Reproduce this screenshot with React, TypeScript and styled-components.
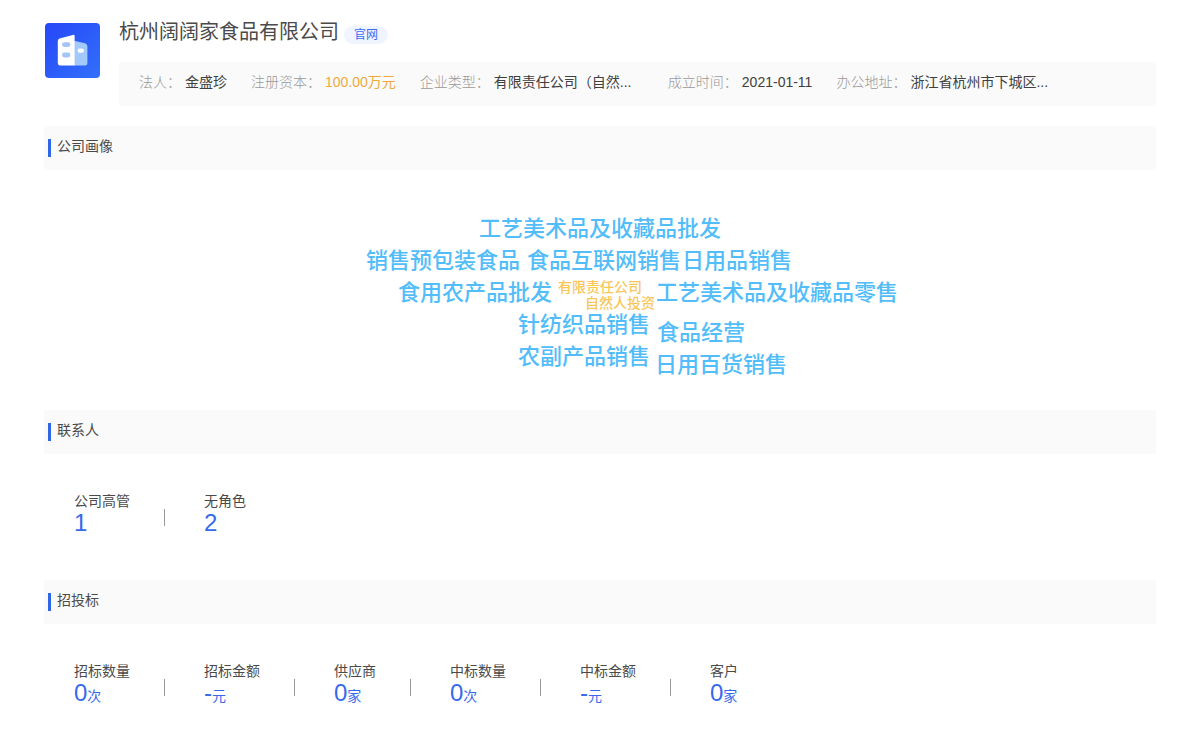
import React from "react";
import styled, { createGlobalStyle } from "styled-components";

const GlobalStyle = createGlobalStyle`
  * { box-sizing: border-box; }
  body {
    margin: 0;
    background: #fff;
    color: #4a4a4a;
    font-family: "Liberation Sans", "Noto Sans CJK SC", sans-serif;
    font-size: 14px;
    line-height: 20px;
  }
`;

const Page = styled.main`
  padding: 18px 44px 32px;
`;

const Header = styled.header`
  display: flex;
  gap: 19px;
  margin-bottom: 20px;
`;

const Logo = styled.svg`
  flex: none;
  width: 56px;
  height: 56px;
  margin-top: 4px;
`;

const HeaderBody = styled.div`
  flex: 1;
  min-width: 0;
`;

const TitleRow = styled.div`
  display: flex;
  align-items: center;
  gap: 5px;
  height: 28px;
  margin-bottom: 16px;
`;

const CompanyName = styled.h1`
  margin: 0;
  font-size: 20px;
  font-weight: 400;
  line-height: 28px;
  color: #4a4a4a;
`;

const SiteLink = styled.a`
  margin-top: 6px;
  padding: 0 10px;
  border-radius: 9px;
  background: #eff4fe;
  color: #3a6cf0;
  font-size: 12px;
  line-height: 18px;
  text-decoration: none;
`;

const Facts = styled.dl`
  display: flex;
  flex-wrap: wrap;
  column-gap: 24px;
  margin: 0;
  padding: 10px 20px 14px;
  background: #fafafa;
`;

const Fact = styled.div`
  display: flex;
  gap: 4px;
`;

const FactLabel = styled.dt`
  color: #999;
  font-weight: 300;
`;

const FactValue = styled.dd<{ $highlight?: boolean; $wide?: boolean }>`
  margin: 0;
  min-width: ${(p) => (p.$wide ? "150px" : "0")};
  color: ${(p) => (p.$highlight ? "#f0a93a" : "#404040")};
  white-space: nowrap;
`;

const SectionHeading = styled.h2`
  display: flex;
  align-items: center;
  gap: 6px;
  height: 44px;
  margin: 0;
  padding: 0 4px;
  background: #fafafa;
  color: #4a4a4a;
  font-size: 14px;
  font-weight: 400;
  line-height: 20px;

  &::before {
    content: "";
    width: 3px;
    height: 18px;
    background: #2f66e8;
  }
`;

const HeadingText = styled.span`
  padding-bottom: 4px;
`;

const CloudArea = styled.div`
  display: flex;
  justify-content: center;
  height: 240px;
`;

const Cloud = styled.div`
  position: relative;
  width: 600px;
`;

const Word = styled.span<{ $x: number; $y: number; $minor?: boolean }>`
  position: absolute;
  left: ${(p) => p.$x}px;
  top: ${(p) => p.$y}px;
  color: ${(p) => (p.$minor ? "#f8c758" : "#52bdf9")};
  font-size: ${(p) => (p.$minor ? 14 : 22)}px;
  line-height: ${(p) => (p.$minor ? 16 : 32)}px;
  font-weight: 500;
  white-space: nowrap;
`;

const Stats = styled.dl`
  display: flex;
  flex-wrap: wrap;
  margin: 0;
  padding: 36px 30px 44px;
`;

const Stat = styled.div`
  display: flex;
  flex-direction: column;
  height: 46px;

  & + & {
    position: relative;
    margin-left: 34px;
    padding-left: 40px;
  }

  & + &::before {
    content: "";
    position: absolute;
    left: 0;
    top: 19px;
    width: 1px;
    height: 17px;
    background: #999;
  }
`;

const StatLabel = styled.dt`
  color: #4a4a4a;
  line-height: 22px;
`;

const StatValue = styled.dd`
  margin: 0;
  color: #3669ec;
  font-size: 24px;
  line-height: 22px;
`;

const Unit = styled.span`
  font-size: 14px;
`;

const facts = [
  { label: "法人：", value: "金盛珍" },
  { label: "注册资本：", value: "100.00万元", highlight: true },
  { label: "企业类型：", value: "有限责任公司（自然...", wide: true },
  { label: "成立时间：", value: "2021-01-11" },
  { label: "办公地址：", value: "浙江省杭州市下城区...", wide: true },
];

const words = [
  { text: "工艺美术品及收藏品批发", x: 179, y: 43 },
  { text: "销售预包装食品", x: 66, y: 75 },
  { text: "食品互联网销售", x: 227, y: 75 },
  { text: "日用品销售", x: 382, y: 75 },
  { text: "食用农产品批发", x: 98, y: 107 },
  { text: "有限责任公司", x: 258, y: 109, minor: true },
  { text: "自然人投资", x: 285, y: 125, minor: true },
  { text: "工艺美术品及收藏品零售", x: 356, y: 107 },
  { text: "针纺织品销售", x: 218, y: 139 },
  { text: "食品经营", x: 357, y: 147 },
  { text: "农副产品销售", x: 218, y: 171 },
  { text: "日用百货销售", x: 355, y: 179 },
];

interface StatItem {
  label: string;
  value: string;
  unit?: string;
}

const contacts: StatItem[] = [
  { label: "公司高管", value: "1" },
  { label: "无角色", value: "2" },
];

const bids: StatItem[] = [
  { label: "招标数量", value: "0", unit: "次" },
  { label: "招标金额", value: "-", unit: "元" },
  { label: "供应商", value: "0", unit: "家" },
  { label: "中标数量", value: "0", unit: "次" },
  { label: "中标金额", value: "-", unit: "元" },
  { label: "客户", value: "0", unit: "家" },
];

function CompanyLogo() {
  return (
    <Logo viewBox="0 0 56 56" aria-hidden="true">
      <defs>
        <linearGradient id="logoBg" x1="0" y1="0" x2="1" y2="1">
          <stop offset="0" stopColor="#2547f8" />
          <stop offset="1" stopColor="#3370fb" />
        </linearGradient>
      </defs>
      <rect x="1" y="1" width="55" height="55" rx="4" fill="url(#logoBg)" />
      <path d="M30 18.8L41 21.3Q43.4 22 43.4 24.4V41Q43.4 43.5 41 43.5H30Z" fill="#a3c9fb" />
      <path d="M15.5 16.6L28.8 12.9Q30.6 12.4 30.6 14.2V43.5H16Q13.8 43.5 13.8 41V19Q13.8 17.2 15.5 16.6Z" fill="#fff" />
      <rect x="18" y="20.2" width="8.4" height="4.8" rx="2.4" fill="#a3c5f8" />
      <rect x="18" y="30.6" width="8.4" height="4.8" rx="2.4" fill="#a3c5f8" />
      <rect x="33.6" y="26.6" width="6.4" height="4.2" rx="2.1" fill="#fff" />
    </Logo>
  );
}

function Section({ title, children }: { title: string; children: React.ReactNode }) {
  return (
    <section>
      <SectionHeading>
        <HeadingText>{title}</HeadingText>
      </SectionHeading>
      {children}
    </section>
  );
}

function StatList({ items }: { items: StatItem[] }) {
  return (
    <Stats>
      {items.map((item) => (
        <Stat key={item.label}>
          <StatLabel>{item.label}</StatLabel>
          <StatValue>
            {item.value}
            {item.unit && <Unit>{item.unit}</Unit>}
          </StatValue>
        </Stat>
      ))}
    </Stats>
  );
}

export default function App() {
  return (
    <>
      <GlobalStyle />
      <Page>
        <Header>
          <CompanyLogo />
          <HeaderBody>
            <TitleRow>
              <CompanyName>杭州阔阔家食品有限公司</CompanyName>
              <SiteLink href="#">官网</SiteLink>
            </TitleRow>
            <Facts>
              {facts.map((f) => (
                <Fact key={f.label}>
                  <FactLabel>{f.label}</FactLabel>
                  <FactValue $highlight={f.highlight} $wide={f.wide}>
                    {f.value}
                  </FactValue>
                </Fact>
              ))}
            </Facts>
          </HeaderBody>
        </Header>
        <Section title="公司画像">
          <CloudArea>
            <Cloud>
              {words.map((w) => (
                <Word key={w.text} $x={w.x} $y={w.y} $minor={w.minor}>
                  {w.text}
                </Word>
              ))}
            </Cloud>
          </CloudArea>
        </Section>
        <Section title="联系人">
          <StatList items={contacts} />
        </Section>
        <Section title="招投标">
          <StatList items={bids} />
        </Section>
      </Page>
    </>
  );
}
